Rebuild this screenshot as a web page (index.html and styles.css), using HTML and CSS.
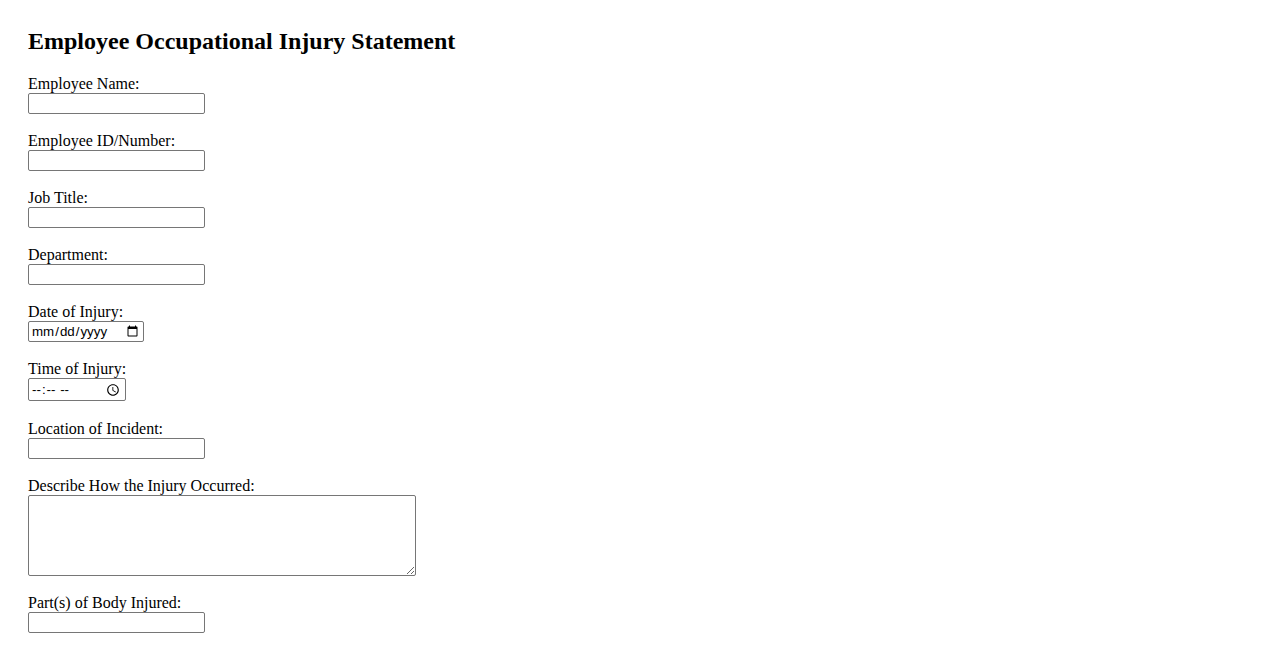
FILE: index.html
```html
<!DOCTYPE html>
<html>
<head>
<meta charset="utf-8">
<title>Employee Occupational Injury Statement</title>
<link rel="stylesheet" href="styles.css">
</head>
<body>
<div class="page">
<h2 class="title">Employee Occupational Injury Statement</h2>
<form class="form">
  <div class="field">
    <label class="label" for="name">Employee Name:</label>
    <input class="text" type="text" id="name">
  </div>
  <div class="field">
    <label class="label" for="eid">Employee ID/Number:</label>
    <input class="text" type="text" id="eid">
  </div>
  <div class="field">
    <label class="label" for="job">Job Title:</label>
    <input class="text" type="text" id="job">
  </div>
  <div class="field">
    <label class="label" for="dept">Department:</label>
    <input class="text" type="text" id="dept">
  </div>
  <div class="field">
    <label class="label" for="date">Date of Injury:</label>
    <input class="date" type="date" id="date">
  </div>
  <div class="field field-time">
    <label class="label" for="time">Time of Injury:</label>
    <input class="time" type="time" id="time">
  </div>
  <div class="field">
    <label class="label" for="loc">Location of Incident:</label>
    <input class="text" type="text" id="loc">
  </div>
  <div class="field">
    <label class="label" for="desc">Describe How the Injury Occurred:</label>
    <textarea class="area" id="desc"></textarea>
  </div>
  <div class="field">
    <label class="label" for="body">Part(s) of Body Injured:</label>
    <input class="text" type="text" id="body">
  </div>
</form>
</div>
</body>
</html>
```

FILE: styles.css
```css
html, body {
  background: #ffffff;
}
body {
  margin: 8px;
  font-family: "Liberation Serif", "Times New Roman", serif;
  font-size: 16px;
  color: #000000;
}
.page {
  padding: 20px;
}
.title {
  margin: 0 0 20px 0;
  font-size: 24px;
  font-weight: bold;
}
.form {
  margin: 0;
}
.field {
  margin-bottom: 18px;
}
.field-time {
  margin-bottom: 19px;
}
.label {
  display: block;
  line-height: 18px;
}
.text, .date, .time, .area {
  display: block;
  box-sizing: border-box;
  margin: 0;
  border: 1px solid #767676;
  border-radius: 2px;
  background: #ffffff;
  font-family: "Liberation Sans", Arial, sans-serif;
  font-size: 13.33px;
  padding: 1px 2px;
}
.text {
  width: 177px;
  height: 21px;
}
.date {
  width: 116px;
  height: 21px;
}
.time {
  width: 98px;
  height: 23px;
  letter-spacing: 1px;
}
.area {
  width: 388px;
  height: 81px;
  resize: both;
}
```
